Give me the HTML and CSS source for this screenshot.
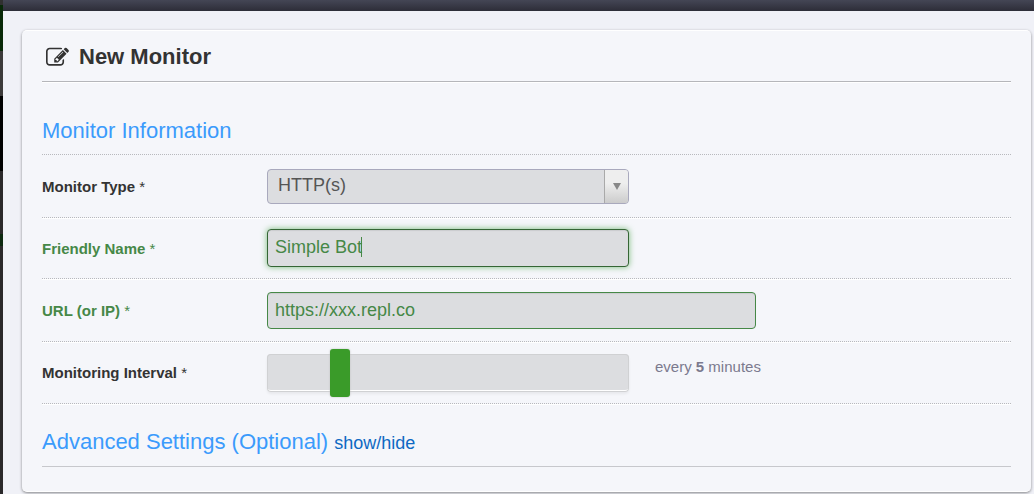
FILE: index.html
```html
<!DOCTYPE html>
<html lang="en">
<head>
<meta charset="utf-8">
<title>New Monitor</title>
<link rel="stylesheet" href="styles.css">
</head>
<body>
<div class="page">
  <div class="topbar"></div>
  <main class="dialog">
    <header class="dialog-header">
      <svg class="icon" viewBox="0 0 1792 1792" aria-hidden="true"><path d="M888 1184l116-116-152-152-116 116v56h96v96h56zm440-720q-16-16-33 1l-350 350q-17 17-1 33t33-1l350-350q17-17 1-33zm80 594v190q0 119-84.500 203.500t-203.500 84.500h-832q-119 0-203.500-84.500t-84.500-203.500v-832q0-119 84.500-203.500t203.500-84.500h832q63 0 117 25 15 7 18 23 3 17-9 29l-49 49q-14 14-32 8-23-6-45-6h-832q-66 0-113 47t-47 113v832q0 66 47 113t113 47h832q66 0 113-47t47-113v-126q0-13 9-22l64-64q15-15 35-7t20 29zm-96-738l288 288-672 672h-288v-288zm444 132l-92 92-288-288 92-92q28-28 68-28t68 28l152 152q28 28 28 68t-28 68z"/></svg>
      <h1 class="dialog-title">New Monitor</h1>
    </header>
    <form class="form">
      <h2 class="section-title section-first">Monitor Information</h2>
      <div class="row row-tall">
        <label class="label" for="type">Monitor Type <span class="star">*</span></label>
        <div class="select-box">
          <select class="select" id="type"><option>HTTP(s)</option></select>
          <span class="select-arrow"></span>
        </div>
      </div>
      <div class="row row-short row-valid">
        <label class="label" for="name">Friendly Name <span class="star">*</span></label>
        <div class="field">
          <input class="input input-active" id="name" type="text" value="Simple Bot">
          <span class="caret"></span>
        </div>
      </div>
      <div class="row row-tall row-valid">
        <label class="label" for="url">URL (or IP) <span class="star">*</span></label>
        <div class="field field-wide">
          <input class="input" id="url" type="text" value="https://xxx.repl.co">
        </div>
      </div>
      <div class="row">
        <label class="label" for="interval">Monitoring Interval <span class="star">*</span></label>
        <div class="field">
          <input class="slider" id="interval" type="range" min="0" max="27" value="5">
        </div>
        <output class="interval" for="interval">every <b>5</b> minutes</output>
      </div>
      <h2 class="section-title section-last">Advanced Settings (Optional) <a class="toggle" href="#">show/hide</a></h2>
    </form>
  </main>
</div>
</body>
</html>
```
FILE: styles.css
```css
* {
  box-sizing: border-box;
}

body {
  margin: 0;
  background: #f0f1f7;
  color: #333;
  font-family: "Liberation Sans", Arial, sans-serif;
  font-size: 15px;
}

.page {
  min-height: 100vh;
  padding-left: 3px;
  background: linear-gradient(#303030 0 5px, #082808 5px 51px, #3c3a3a 51px 96px, #000 96px 171px, #2a282a 171px 234px, #0c2810 234px 246px, #2a282a 246px) left / 3px 100% no-repeat;
}

.topbar {
  height: 11px;
  background: linear-gradient(#444655, #2d2d38);
}

.dialog {
  margin: 19px 3px 0 19px;
  padding: 0 20px 24px;
  border: 1px solid #fff;
  border-width: 1px 0;
  border-radius: 5px;
  background: #f5f6fa;
  box-shadow: 0 1px 3px rgba(0, 0, 0, 0.45);
}

.dialog-header {
  display: flex;
  align-items: center;
  gap: 10px;
  height: 51px;
  padding: 2px 0 0 4px;
  border-bottom: 1px solid #b5b6ba;
  box-shadow: 0 1px #fff;
}

.icon {
  width: 23px;
  height: 23px;
  fill: #333;
}

.dialog-title {
  margin: 0;
  font-size: 22px;
  line-height: 26px;
}

.section-title {
  margin: 0;
  color: #3b9bfc;
  font-size: 22px;
  font-weight: 400;
  line-height: 26px;
}

.section-first {
  padding: 36px 0 10px;
  border-bottom: 1px dotted #b8b9bd;
}

.section-last {
  padding: 25px 0 10px;
  border-bottom: 1px solid #c7c8cc;
}

.toggle {
  color: #0f69c3;
  font-size: 18px;
  text-decoration: none;
}

.row {
  display: flex;
  align-items: center;
  min-height: 62px;
  border-bottom: 1px dotted #b8b9bd;
  box-shadow: 0 1px #fff;
}

.row-tall {
  min-height: 63px;
}

.row-short {
  min-height: 61px;
}

.label {
  flex: 0 0 225px;
  font-weight: 700;
}

.star {
  font-weight: 400;
}

.row-valid {
  color: #468847;
}

.field,
.select-box {
  position: relative;
  flex: 0 1 362px;
}

.field-wide {
  flex-basis: 489px;
}

.select,
.input {
  display: block;
  width: 100%;
  border: 1px solid #a9a9bd;
  border-radius: 4px;
  background: #dcdde0;
  color: #555;
  font-family: inherit;
  font-size: 18px;
}

.select {
  height: 35px;
  padding: 0 10px 2px;
  appearance: none;
}

.select-arrow {
  position: absolute;
  top: 1px;
  right: 1px;
  bottom: 1px;
  display: grid;
  place-items: center;
  width: 24px;
  border-left: 1px solid #a9a9a9;
  border-radius: 0 3px 3px 0;
  background: linear-gradient(#eee 40%, #ccc);
  pointer-events: none;
}

.select-arrow::after {
  content: "";
  border: 4px solid transparent;
  border-top: 7px solid #888;
  border-bottom: 0;
}

.input {
  height: 37px;
  padding: 0 7px;
  border-color: #468847;
  box-shadow: inset 0 1px 1px rgba(0, 0, 0, 0.08);
  color: #468847;
}

.input-active {
  height: 38px;
  padding-bottom: 2px;
  border-color: #356635;
  outline: 0;
  box-shadow: inset 0 1px 1px rgba(0, 0, 0, 0.08), 0 0 6px #7aba7b;
}

.caret {
  position: absolute;
  top: 8px;
  left: 94px;
  width: 1px;
  height: 20px;
  background: #468847;
}

.slider {
  display: block;
  width: 100%;
  height: 38px;
  margin: 0;
  border-radius: 4px;
  background: #dcdde0;
  box-shadow: inset 0 0 0 1px #d0d1d3, inset 0 -2px #fff, 0 2px 3px rgba(0, 0, 0, 0.06);
  appearance: none;
}

.slider::-webkit-slider-thumb {
  width: 20px;
  height: 48px;
  border-radius: 3px;
  background: #3a9b29;
  box-shadow: 0 0 2px #bbb;
  appearance: none;
}

.interval {
  padding: 0 0 12px 26px;
  color: #7b7a8e;
}
```
